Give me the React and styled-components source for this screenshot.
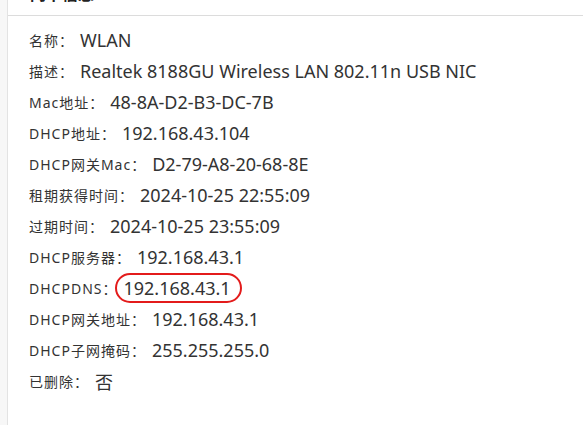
import styled, { createGlobalStyle } from "styled-components";

const GlobalStyle = createGlobalStyle`
  html, body {
    margin: 0;
    padding: 0;
    background: #fff;
  }
  body {
    font-family: "Noto Sans CJK SC", "Noto Sans", sans-serif;
    overflow: hidden;
  }
`;

const rows = [
  { label: "名称：", value: "WLAN" },
  { label: "描述：", value: "Realtek 8188GU Wireless LAN 802.11n USB NIC" },
  { label: "Mac地址：", value: "48-8A-D2-B3-DC-7B" },
  { label: "DHCP地址：", value: "192.168.43.104" },
  { label: "DHCP网关Mac：", value: "D2-79-A8-20-68-8E" },
  { label: "租期获得时间：", value: "2024-10-25 22:55:09" },
  { label: "过期时间：", value: "2024-10-25 23:55:09" },
  { label: "DHCP服务器：", value: "192.168.43.1" },
  { label: "DHCPDNS：", value: "192.168.43.1", marked: true },
  { label: "DHCP网关地址：", value: "192.168.43.1" },
  { label: "DHCP子网掩码：", value: "255.255.255.0" },
  { label: "已删除：", value: "否" },
];

const App = () => {
  return (
    <Page>
      <GlobalStyle />
      <Gutter />
      <Panel>
        <Header>
          <Title>网卡信息</Title>
        </Header>
        <List>
          {rows.map((row) => (
            <Row key={row.label}>
              <Label>{row.label}</Label>
              <Value $marked={row.marked}>{row.value}</Value>
            </Row>
          ))}
        </List>
      </Panel>
    </Page>
  );
};

const Page = styled.div`
  display: flex;
  width: 583px;
  height: 425px;
  background: #fff;
`;

const Gutter = styled.div`
  width: 7px;
  background: #f7f7f7;
  border-right: 1px solid #e3e3e3;
`;

const Panel = styled.div`
  flex: 1;
  display: flex;
  flex-direction: column;
`;

const Header = styled.div`
  height: 15px;
  border-bottom: 1px solid #dcdcdc;
  overflow: hidden;
  padding-left: 22px;
`;

const Title = styled.div`
  margin-top: -16px;
  font-size: 16px;
  font-weight: 700;
  line-height: 18px;
  color: #222;
`;

const List = styled.div`
  display: flex;
  flex-direction: column;
  padding: 8px 0 0 21px;
`;

const Row = styled.div`
  display: flex;
  align-items: center;
  height: 31px;
`;

const Label = styled.span`
  font-family: "Noto Sans", "Noto Sans CJK SC", sans-serif;
  font-size: 14px;
  letter-spacing: 1px;
  color: #333;
  margin-right: 6px;
  white-space: nowrap;
`;

const Value = styled.span`
  position: relative;
  font-family: "Noto Sans", "Noto Sans CJK SC", sans-serif;
  font-size: 18px;
  color: #333;
  white-space: nowrap;

  &::after {
    content: "";
    display: ${(p) => (p.$marked ? "block" : "none")};
    position: absolute;
    left: -8px;
    right: -11px;
    top: -3px;
    bottom: -3px;
    border: 2px solid #e31b1b;
    border-radius: 16px;
  }
`;

export default App;
